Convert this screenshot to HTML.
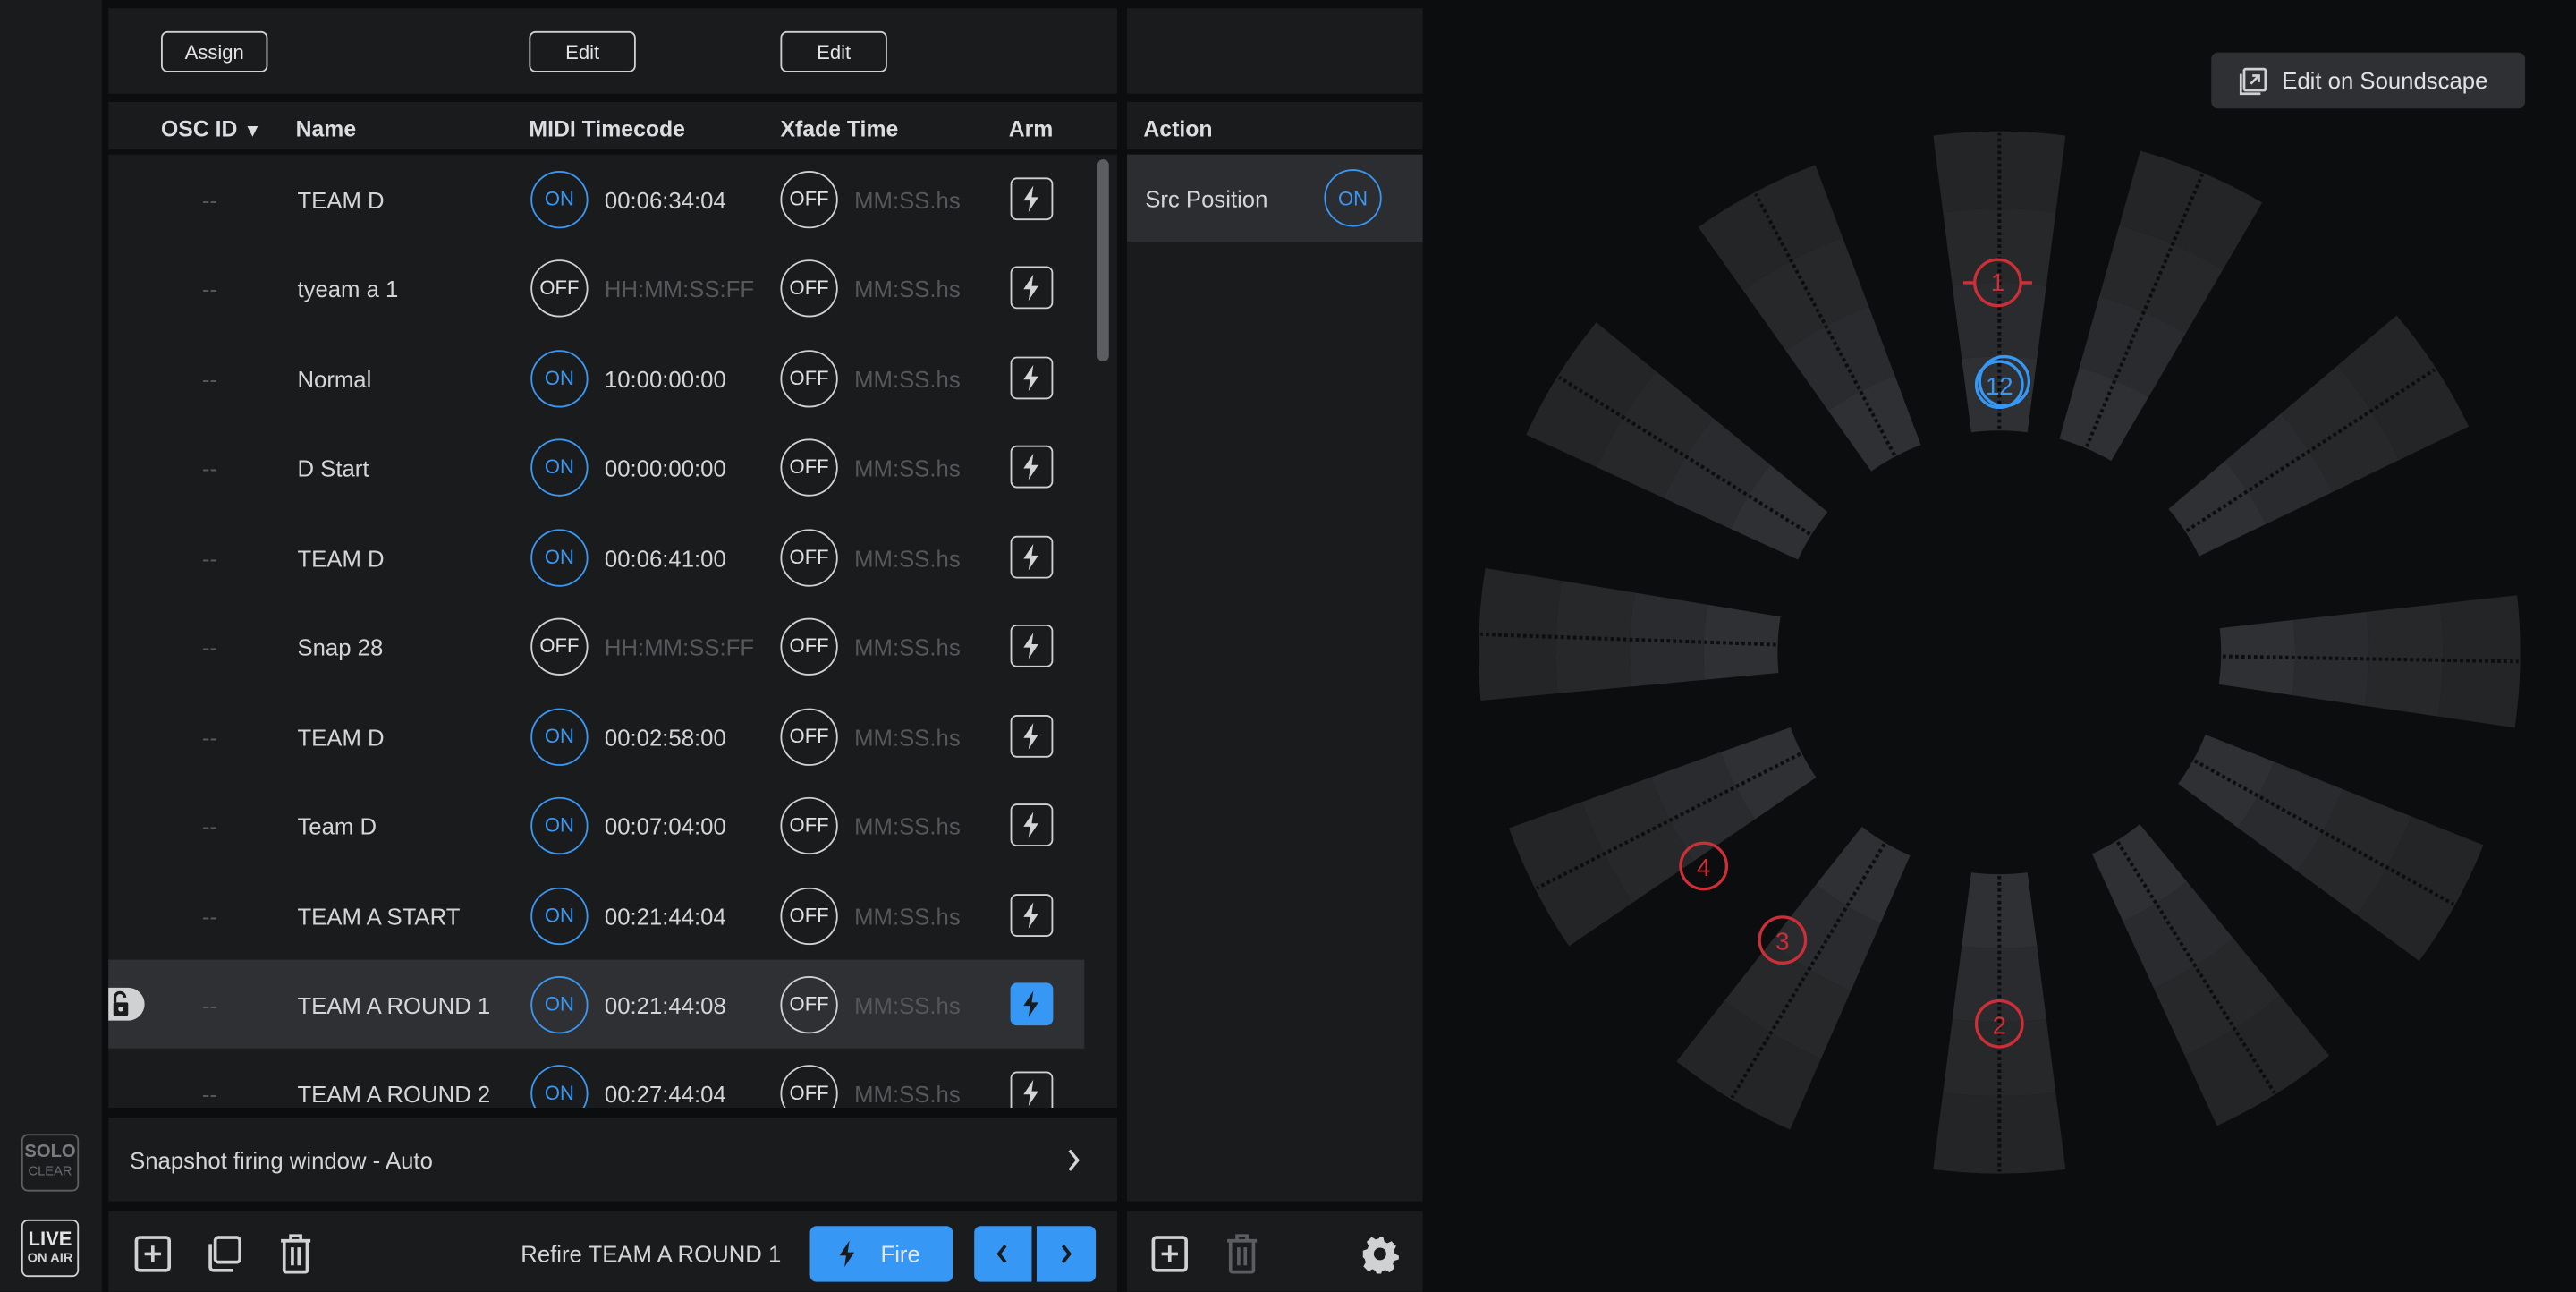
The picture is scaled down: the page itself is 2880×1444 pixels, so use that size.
<!DOCTYPE html>
<html><head><meta charset="utf-8"><style>
*{box-sizing:border-box;margin:0;padding:0}
html,body{width:2880px;height:1444px;overflow:hidden;background:#0c0d0e}
#s{position:absolute;left:0;top:0;width:1568px;height:786px;transform:scale(1.836735);transform-origin:0 0;font-family:"Liberation Sans",sans-serif;color:#d4d5d7;font-size:14px}
.p{position:absolute;background:#1a1b1d}
.btn{position:absolute;border:1.3px solid #cfd0d2;border-radius:4px;height:25px;font-size:12px;display:flex;align-items:center;justify-content:center;color:#e4e4e6}
.hd{position:absolute;top:71px;font-weight:bold;font-size:13.5px;color:#dcdde0}
.row{position:absolute;left:66px;width:594px;height:54px}
.row .t{position:absolute;top:50%;transform:translateY(-45%);white-space:nowrap}
.c{position:absolute;top:50%;width:35px;height:35px;margin-top:-17.5px;border-radius:50%;border:1.4px solid #cfd0d2;font-size:12px;display:flex;align-items:center;justify-content:center;color:#e0e0e2}
.c.on{border-color:#3a97f2;color:#3a97f2}
.arm{position:absolute;left:549px;top:50%;margin-top:-13px;width:26px;height:26px;border:1.4px solid #cfd0d2;border-radius:4px;display:flex;align-items:center;justify-content:center}
.dim{color:#56575a}
</style></head><body><div id="s">
<div class="p" style="left:0;top:0;width:62px;height:786px"></div>
<div class="p" style="left:66px;top:5px;width:614px;height:52px"></div>
<div class="btn" style="left:98px;top:19px;width:65px">Assign</div>
<div class="btn" style="left:322px;top:19px;width:65px">Edit</div>
<div class="btn" style="left:475px;top:19px;width:65px">Edit</div>
<div class="p" style="left:686px;top:5px;width:180px;height:52px"></div>
<div class="p" style="left:66px;top:62px;width:614px;height:29px"></div>
<div class="hd" style="left:98px">OSC ID <span style="font-size:11px">&#9660;</span></div>
<div class="hd" style="left:180px">Name</div>
<div class="hd" style="left:322px">MIDI Timecode</div>
<div class="hd" style="left:475px">Xfade Time</div>
<div class="hd" style="left:614px">Arm</div>
<div class="p" style="left:686px;top:62px;width:180px;height:29px"></div>
<div class="hd" style="left:696px">Action</div>
<div class="p" style="left:66px;top:94px;width:614px;height:580px;overflow:hidden" id="list"></div>
<div class="p" style="left:686px;top:94px;width:180px;height:637px"></div>
<div style="position:absolute;left:686px;top:94px;width:180px;height:53px;background:#2c2d30"><span style="position:absolute;left:11px;top:19px">Src Position</span><div class="c on" style="left:120px">ON</div></div>
<div style="position:absolute;left:668px;top:97px;width:7px;height:123px;border-radius:4px;background:#5b5d61"></div>
<div id="rows" style="position:absolute;left:0;top:0;width:680px;height:674px;overflow:hidden;clip-path:inset(94px 0 0 0)">
<div class="row" style="top:94px"><span class="t dim" style="left:57px">--</span><span class="t" style="left:115px">TEAM D</span><div class="c on" style="left:257px">ON</div><span class="t" style="left:302px">00:06:34:04</span><div class="c" style="left:409px">OFF</div><span class="t dim" style="left:454px">MM:SS.hs</span><div class="arm"><svg width="12" height="16" viewBox="0 0 12 16"><path d="M7 0L1 9h4l-1 7 6-9H6z" fill="#d4d5d7"/></svg></div></div>
<div class="row" style="top:148px"><span class="t dim" style="left:57px">--</span><span class="t" style="left:115px">tyeam a 1</span><div class="c" style="left:257px">OFF</div><span class="t dim" style="left:302px">HH:MM:SS:FF</span><div class="c" style="left:409px">OFF</div><span class="t dim" style="left:454px">MM:SS.hs</span><div class="arm"><svg width="12" height="16" viewBox="0 0 12 16"><path d="M7 0L1 9h4l-1 7 6-9H6z" fill="#d4d5d7"/></svg></div></div>
<div class="row" style="top:203px"><span class="t dim" style="left:57px">--</span><span class="t" style="left:115px">Normal</span><div class="c on" style="left:257px">ON</div><span class="t" style="left:302px">10:00:00:00</span><div class="c" style="left:409px">OFF</div><span class="t dim" style="left:454px">MM:SS.hs</span><div class="arm"><svg width="12" height="16" viewBox="0 0 12 16"><path d="M7 0L1 9h4l-1 7 6-9H6z" fill="#d4d5d7"/></svg></div></div>
<div class="row" style="top:257px"><span class="t dim" style="left:57px">--</span><span class="t" style="left:115px">D Start</span><div class="c on" style="left:257px">ON</div><span class="t" style="left:302px">00:00:00:00</span><div class="c" style="left:409px">OFF</div><span class="t dim" style="left:454px">MM:SS.hs</span><div class="arm"><svg width="12" height="16" viewBox="0 0 12 16"><path d="M7 0L1 9h4l-1 7 6-9H6z" fill="#d4d5d7"/></svg></div></div>
<div class="row" style="top:312px"><span class="t dim" style="left:57px">--</span><span class="t" style="left:115px">TEAM D</span><div class="c on" style="left:257px">ON</div><span class="t" style="left:302px">00:06:41:00</span><div class="c" style="left:409px">OFF</div><span class="t dim" style="left:454px">MM:SS.hs</span><div class="arm"><svg width="12" height="16" viewBox="0 0 12 16"><path d="M7 0L1 9h4l-1 7 6-9H6z" fill="#d4d5d7"/></svg></div></div>
<div class="row" style="top:366px"><span class="t dim" style="left:57px">--</span><span class="t" style="left:115px">Snap 28</span><div class="c" style="left:257px">OFF</div><span class="t dim" style="left:302px">HH:MM:SS:FF</span><div class="c" style="left:409px">OFF</div><span class="t dim" style="left:454px">MM:SS.hs</span><div class="arm"><svg width="12" height="16" viewBox="0 0 12 16"><path d="M7 0L1 9h4l-1 7 6-9H6z" fill="#d4d5d7"/></svg></div></div>
<div class="row" style="top:421px"><span class="t dim" style="left:57px">--</span><span class="t" style="left:115px">TEAM D</span><div class="c on" style="left:257px">ON</div><span class="t" style="left:302px">00:02:58:00</span><div class="c" style="left:409px">OFF</div><span class="t dim" style="left:454px">MM:SS.hs</span><div class="arm"><svg width="12" height="16" viewBox="0 0 12 16"><path d="M7 0L1 9h4l-1 7 6-9H6z" fill="#d4d5d7"/></svg></div></div>
<div class="row" style="top:475px"><span class="t dim" style="left:57px">--</span><span class="t" style="left:115px">Team D</span><div class="c on" style="left:257px">ON</div><span class="t" style="left:302px">00:07:04:00</span><div class="c" style="left:409px">OFF</div><span class="t dim" style="left:454px">MM:SS.hs</span><div class="arm"><svg width="12" height="16" viewBox="0 0 12 16"><path d="M7 0L1 9h4l-1 7 6-9H6z" fill="#d4d5d7"/></svg></div></div>
<div class="row" style="top:530px"><span class="t dim" style="left:57px">--</span><span class="t" style="left:115px">TEAM A START</span><div class="c on" style="left:257px">ON</div><span class="t" style="left:302px">00:21:44:04</span><div class="c" style="left:409px">OFF</div><span class="t dim" style="left:454px">MM:SS.hs</span><div class="arm"><svg width="12" height="16" viewBox="0 0 12 16"><path d="M7 0L1 9h4l-1 7 6-9H6z" fill="#d4d5d7"/></svg></div></div>
<div class="row" style="top:584px;background:#2f3033"><div style="position:absolute;left:0;top:17px;width:22px;height:20px;border-radius:0 10px 10px 0;background:#d0d1d3"><svg width="14" height="16" viewBox="0 0 14 16" style="position:absolute;left:1px;top:2px"><path d="M3 7V4a3 3 0 0 1 6 0" stroke="#1a1b1d" stroke-width="1.8" fill="none"/><rect x="2" y="7" width="9" height="8" rx="1" fill="#1a1b1d"/><circle cx="6.5" cy="11" r="1.5" fill="#d0d1d3"/></svg></div><span class="t dim" style="left:57px">--</span><span class="t" style="left:115px">TEAM A ROUND 1</span><div class="c on" style="left:257px">ON</div><span class="t" style="left:302px">00:21:44:08</span><div class="c" style="left:409px">OFF</div><span class="t dim" style="left:454px">MM:SS.hs</span><div class="arm" style="background:#3797f5;border-color:#3797f5"><svg width="12" height="16" viewBox="0 0 12 16"><path d="M7 0L1 9h4l-1 7 6-9H6z" fill="#1a1b1d"/></svg></div></div>
<div class="row" style="top:638px"><span class="t dim" style="left:57px">--</span><span class="t" style="left:115px">TEAM A ROUND 2</span><div class="c on" style="left:257px">ON</div><span class="t" style="left:302px">00:27:44:04</span><div class="c" style="left:409px">OFF</div><span class="t dim" style="left:454px">MM:SS.hs</span><div class="arm"><svg width="12" height="16" viewBox="0 0 12 16"><path d="M7 0L1 9h4l-1 7 6-9H6z" fill="#d4d5d7"/></svg></div></div>
</div>
<div class="p" style="left:66px;top:680px;width:614px;height:51px"><span style="position:absolute;left:13px;top:18px">Snapshot firing window - Auto</span><svg style="position:absolute;left:583px;top:19px" width="10" height="14" viewBox="0 0 10 14"><path d="M2 1l5 6-5 6" stroke="#d4d5d7" stroke-width="1.8" fill="none"/></svg></div>
<div class="p" style="left:66px;top:737px;width:614px;height:49px">
<svg style="position:absolute;left:15px;top:14px" width="24" height="24" viewBox="0 0 24 24"><rect x="2" y="2" width="20" height="20" rx="2" stroke="#d0d1d3" stroke-width="2" fill="none"/><path d="M12 7v10M7 12h10" stroke="#d0d1d3" stroke-width="2"/></svg>
<svg style="position:absolute;left:58px;top:14px" width="24" height="24" viewBox="0 0 24 24"><rect x="7" y="2" width="15" height="15" rx="2" stroke="#d0d1d3" stroke-width="2" fill="none"/><path d="M4 6v14a2 2 0 0 0 2 2h12" stroke="#d0d1d3" stroke-width="2" fill="none"/></svg>
<svg style="position:absolute;left:103px;top:13px" width="22" height="26" viewBox="0 0 22 26"><path d="M2 5h18M8 5V2h6v3M4 5v18a1 1 0 0 0 1 1h12a1 1 0 0 0 1-1V5M9 9v11M13 9v11" stroke="#d0d1d3" stroke-width="2" fill="none"/></svg>
<span style="position:absolute;left:251px;top:18px">Refire TEAM A ROUND 1</span>
<div style="position:absolute;left:427px;top:9px;width:87px;height:34px;border-radius:4px;background:#3797f5"><svg style="position:absolute;left:17px;top:9px" width="12" height="16" viewBox="0 0 12 16"><path d="M7 0L1 9h4l-1 7 6-9H6z" fill="#1a1b1d"/></svg><span style="position:absolute;left:43px;top:9px;color:#e4e6ea">Fire</span></div>
<div style="position:absolute;left:527px;top:9px;width:35px;height:34px;border-radius:4px 0 0 4px;background:#3797f5"><svg style="position:absolute;left:12px;top:10px" width="10" height="14" viewBox="0 0 10 14"><path d="M7 2L3 7l4 5" stroke="#1a1b1d" stroke-width="2" fill="none"/></svg></div>
<div style="position:absolute;left:565px;top:9px;width:36px;height:34px;border-radius:0 4px 4px 0;background:#3797f5"><svg style="position:absolute;left:13px;top:10px" width="10" height="14" viewBox="0 0 10 14"><path d="M3 2l4 5-4 5" stroke="#1a1b1d" stroke-width="2" fill="none"/></svg></div>
</div>
<div class="p" style="left:686px;top:737px;width:180px;height:49px">
<svg style="position:absolute;left:14px;top:14px" width="24" height="24" viewBox="0 0 24 24"><rect x="2" y="2" width="20" height="20" rx="2" stroke="#d0d1d3" stroke-width="2" fill="none"/><path d="M12 7v10M7 12h10" stroke="#d0d1d3" stroke-width="2"/></svg>
<svg style="position:absolute;left:59px;top:13px" width="22" height="26" viewBox="0 0 22 26"><path d="M2 5h18M8 5V2h6v3M4 5v18a1 1 0 0 0 1 1h12a1 1 0 0 0 1-1V5M9 9v11M13 9v11" stroke="#5c5d60" stroke-width="2" fill="none"/></svg>
<svg style="position:absolute;left:142px;top:14px" width="24" height="24" viewBox="0 0 24 24"><path d="M12 1.5l2 .3.6 2.7 1.9 1 2.5-1.2 2.8 3-1.3 2.5.5 2.1 2.5 1.3-.1 2.1-2.6.8-1 1.9 1 2.6-3 2.7-2.4-1.5-2.1.6-1 2.5h-2.1l-.9-2.6-1.9-1-2.5 1.3-3-3 1.4-2.4-.6-2.1L1.6 14v-4l2.6-.9.9-1.9L3.9 4.6l3-2.9 2.4 1.5 2-.6z" fill="#d0d1d3"/><circle cx="12" cy="12" r="3.8" fill="#1a1b1d"/></svg>
</div>
<div style="position:absolute;left:13px;top:690px;width:35px;height:35px;border:1.3px solid #5e5f62;border-radius:4px;text-align:center;line-height:1"><div style="font-size:11px;font-weight:bold;color:#7a7b7e;margin-top:5px">SOLO</div><div style="font-size:8px;color:#6a6b6e;margin-top:2px">CLEAR</div></div>
<div style="position:absolute;left:13px;top:742px;width:35px;height:35px;border:1.3px solid #d0d1d3;border-radius:4px;text-align:center;line-height:1"><div style="font-size:12px;font-weight:bold;color:#e4e4e6;margin-top:5px">LIVE</div><div style="font-size:8px;font-weight:bold;color:#d0d1d3;margin-top:2px">ON AIR</div></div>
<div style="position:absolute;left:1346px;top:32px;width:191px;height:34px;border-radius:4px;background:#2f3033"><svg style="position:absolute;left:17px;top:9px" width="17" height="17" viewBox="0 0 17 17"><rect x="3" y="1" width="13" height="13" rx="1" stroke="#d0d1d3" stroke-width="1.5" fill="none"/><path d="M1 4v12h12M7 10l5-5M8 5h4v4" stroke="#d0d1d3" stroke-width="1.5" fill="none"/></svg><span style="position:absolute;left:43px;top:9px;color:#e0e1e3">Edit on Soundscape</span></div>
<svg style="position:absolute;left:0;top:0" width="1568" height="786" viewBox="0 0 1568 786">
<defs><g id="w">
<path d="M-40.3,-314.5 A317,317 0 0 1 40.3,-314.5 L34.3,-267.8 A270,270 0 0 0 -34.3,-267.8Z" fill="#242527"/>
<path d="M-34.3,-267.8 A270,270 0 0 1 34.3,-267.8 L28.6,-223.2 A225,225 0 0 0 -28.6,-223.2Z" fill="#27282a"/>
<path d="M-28.6,-223.2 A225,225 0 0 1 28.6,-223.2 L22.9,-178.6 A180,180 0 0 0 -22.9,-178.6Z" fill="#2a2b2e"/>
<path d="M-22.9,-178.6 A180,180 0 0 1 22.9,-178.6 L17.1,-133.9 A135,135 0 0 0 -17.1,-133.9Z" fill="#2f3033"/>
<line x1="0" y1="-136" x2="0" y2="-316" stroke="#0c0d0e" stroke-width="2.2" stroke-dasharray="2 1.8"/>
</g></defs>
<g transform="translate(1217,397)">
<use href="#w" transform="rotate(0)"/><use href="#w" transform="rotate(23)"/><use href="#w" transform="rotate(57)"/><use href="#w" transform="rotate(91)"/><use href="#w" transform="rotate(119)"/><use href="#w" transform="rotate(148)"/><use href="#w" transform="rotate(180)"/><use href="#w" transform="rotate(211)"/><use href="#w" transform="rotate(243)"/><use href="#w" transform="rotate(272)"/><use href="#w" transform="rotate(302)"/><use href="#w" transform="rotate(332)"/>
</g>
<g fill="none" stroke="#cc2f38" stroke-width="1.8">
<circle cx="1216" cy="172" r="14"/><path d="M1195 172h7M1230 172h7"/>
<circle cx="1217" cy="623" r="14"/><circle cx="1037" cy="527" r="14"/><circle cx="1085" cy="572" r="14"/>
</g>
<g fill="none" stroke="#3797f5" stroke-width="1.8"><circle cx="1220" cy="232" r="15"/><circle cx="1217" cy="234" r="14"/></g>
<g font-family="Liberation Sans,sans-serif" font-size="15" text-anchor="middle">
<text x="1216" y="177" fill="#cc2f38">1</text><text x="1217" y="629" fill="#cc2f38">2</text><text x="1085" y="578" fill="#cc2f38">3</text><text x="1037" y="533" fill="#cc2f38">4</text><text x="1217" y="240" fill="#3797f5">12</text>
</g>
</svg>
</div></body></html>
